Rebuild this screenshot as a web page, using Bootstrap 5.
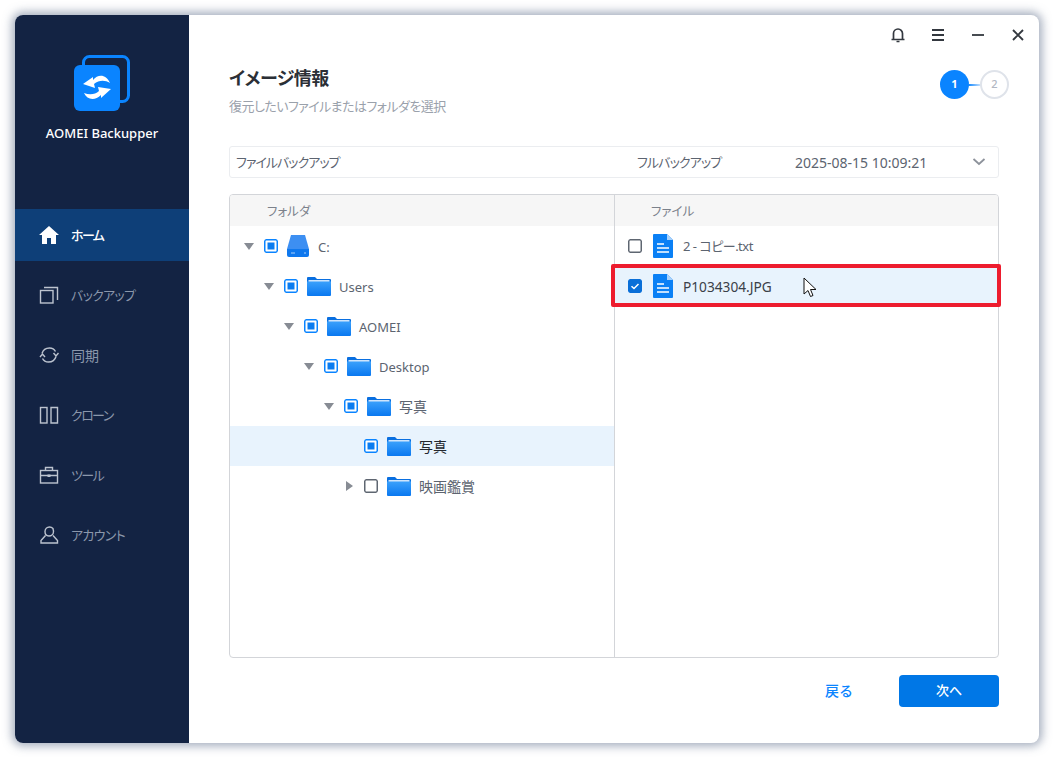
<!DOCTYPE html>
<html lang="ja">
<head>
<meta charset="utf-8">
<title>AOMEI Backupper</title>
<link href="https://cdn.jsdelivr.net/npm/bootstrap@5.3.0/dist/css/bootstrap.min.css" rel="stylesheet">
<style>
html,body{height:100%;background:#fff;margin:0;overflow:hidden}
body{font-family:"Noto Sans","Noto Sans CJK JP",sans-serif;font-size:13px;color:#5c6470;padding:15px;font-feature-settings:"palt"}
.appwin{width:1024px;height:728px;border-radius:8px;box-shadow:0 0 10px 3px rgba(90,105,135,.55);position:relative;background:#fff}
.side{width:174px;background:#132343;border-radius:8px 0 0 8px;flex:none}
.logo-box{height:194px;padding-top:40px}
.logo-name{color:#fff;font-size:13px;font-weight:500;margin-top:11px;line-height:18px}
.side-item{height:52px;margin-bottom:8px;padding-left:24px;color:#8b97ab;font-size:13px;gap:12px}
.side-item span{padding-top:1px;letter-spacing:-.7px}
.side-item .tight{letter-spacing:-1.6px}
.side-item .kj{font-size:14px;letter-spacing:0}
.side-item.on{background:#0e3f78;color:#fff;font-weight:500}
.side-item svg{flex:none}
.main{padding:0 40px;min-width:0}
.tbar{height:40px;margin-right:-27px;gap:24px}
.tbar svg{display:block}
.head-h{font-size:18px;font-weight:700;color:#2b2f36;line-height:26px;margin:0;letter-spacing:-.5px}
.head-s{font-size:13px;color:#9aa1ab;line-height:18px;margin-top:6px;letter-spacing:-.55px}
.headrow{height:91px;padding-top:10px}
.stepc{width:29px;height:29px;border-radius:50%;font-size:11px;font-weight:700}
.stepc.act{background:#0a84ff;color:#fff}
.stepc.off{border:2px solid #dfe3ea;color:#b1b7c3;font-weight:500}
.stepl{width:13px;height:2px;background:linear-gradient(90deg,#0a84ff,#cfe4fb);margin:0 -1px;flex:none}
.steps{margin-top:5px;margin-right:-10px}
.selbar{height:32px;border:1px solid #ebedf0;border-radius:3px;padding:0 12px 0 6px;color:#5c6470}
.selbar span{padding-top:1px}
.cx1{width:401px;letter-spacing:-1px}
.cx2{width:158px;letter-spacing:-.9px}
.dt{font-size:14px}
.panel{height:464px;margin-top:16px;border:1px solid #d3d5d9;border-radius:4px;overflow:hidden}
.pane-l{width:385px;border-right:1px solid #d3d5d9;flex:none}
.pane-r{flex:1 1 0;min-width:0}
.ph{height:31px;background:#f6f6f6;color:#7b818b;font-size:12.5px;padding-left:36px;padding-top:4px}
.pane-l .ph{padding-left:37px}
.trow{height:40px}
.trow span.tx{padding-top:3px}
.trow span.tx.kj{padding-top:1px}
.trow.sel{background:#e8f3fd;color:#23272e}
.kj{font-size:14px}
.tw{width:10px;margin-right:10px;flex:none;display:flex;justify-content:center}
.cb{width:14px;height:14px;border-radius:2px;flex:none;margin-right:9px;display:block}
.tic{flex:none;margin-right:8px;display:block}
.drv{margin-right:9px}
.lv0{padding-left:14px}.lv1{padding-left:34px}.lv2{padding-left:54px}.lv3{padding-left:74px}.lv4{padding-left:94px}.lv5{padding-left:114px}
.frow{height:40px;padding-left:13px}
.frow span.tx{padding-top:2px}
.frow.sel{background:#e8f3fd;color:#3a4048}
.frow .cb{margin-right:11px}
.frow .tic{margin-right:10px}
.fa{letter-spacing:-.5px}
.fn{font-size:13.7px}
.foot{height:85px;padding-bottom:20px}
.btn-back{color:#0a84ff;font-size:14px;font-weight:500;width:80px;margin-right:20px;padding:0;border:0;background:none}
.btn-next{width:100px;height:32px;background:#0077e6;color:#fff;border:0;border-radius:4px;font-size:13px;font-weight:500;padding:0}
.redbox{position:absolute;left:596px;top:249px;width:390px;height:43px;border:4px solid #ed1c2e;border-radius:2px;pointer-events:none}
.mouse{position:absolute;left:788px;top:262px}
</style>
</head>
<body>
<div class="appwin d-flex">
  <aside class="side d-flex flex-column">
    <div class="logo-box d-flex flex-column align-items-center">
      <svg width="58" height="58" viewBox="0 0 58 58"><rect x="10.500" y="1.500" width="45" height="45" rx="6" fill="none" stroke="#0a84ff" stroke-width="3"/><rect x="1" y="10" width="46" height="46" rx="6" fill="#0a84ff"/><path d="M10 29l10-7v3c5-6 13-6 17 3-5-3-11-3-16 1l1 4z" fill="#fff"/><path d="M38 34l-10 9v-3c-6 6-14 5-17-2 5 2 11 2 15-2l-1-4z" fill="#fff"/></svg>
      <div class="logo-name">AOMEI Backupper</div>
    </div>
    <div class="side-item on d-flex align-items-center">
      <svg width="20" height="18" viewBox="0 0 20 18"><path d="M10 0L0 9h3v9h5v-6h4v6h5V9h3z" fill="#fff"/></svg><span class="tight">ホーム</span>
    </div>
    <div class="side-item d-flex align-items-center">
      <svg width="20" height="18" viewBox="0 0 20 18" fill="none" stroke="#bcc3cf" stroke-width="1.400"><rect x="1.500" y="4.500" width="12.500" height="12.500"/><path d="M5 1.500h13.500V14"/></svg><span>バックアップ</span>
    </div>
    <div class="side-item d-flex align-items-center">
      <svg width="20" height="18" viewBox="0 0 20 18" fill="none" stroke="#bcc3cf" stroke-width="1.400"><path d="M3 7.500C4 4 7 2 10.500 2c3 0 5 1.500 6 3.500"/><path d="M17 10.500C16 14 13 16 9.500 16c-3 0-5-1.500-6-3.500"/><path d="M1 11l2.500-3L6 11M14.500 7l2.500 3 2.500-3"/></svg><span class="kj">同期</span>
    </div>
    <div class="side-item d-flex align-items-center">
      <svg width="20" height="18" viewBox="0 0 20 18" fill="none" stroke="#bcc3cf" stroke-width="1.400"><rect x="1.500" y="1.500" width="6.500" height="15.500"/><path d="M12 1.500h6.500v15.500H12z"/></svg><span class="tight">クローン</span>
    </div>
    <div class="side-item d-flex align-items-center">
      <svg width="20" height="18" viewBox="0 0 20 18" fill="none" stroke="#bcc3cf" stroke-width="1.400"><rect x="1.500" y="4.500" width="17" height="12.500"/><path d="M6.500 4.500V1.500h7v3M1.500 9.500h17"/><rect x="8.500" y="8.500" width="3" height="2.500" fill="#bcc3cf" stroke="none"/></svg><span class="tight">ツール</span>
    </div>
    <div class="side-item d-flex align-items-center">
      <svg width="20" height="18" viewBox="0 0 20 18" fill="none" stroke="#bcc3cf" stroke-width="1.400"><path d="M6 5.500C6 3 8 1 10.500 1c2 0 3 1 3.500 1.500 0 1 .5 1.500.5 3 0 2.500-2 4.500-4.500 4.500S6 8 6 5.500z"/><path d="M6.500 9.500L2 14.500v2.500h16.500v-2.500L14 9.500"/></svg><span>アカウント</span>
    </div>
  </aside>
  <main class="main flex-grow-1 d-flex flex-column">
    <div class="tbar d-flex align-items-center justify-content-end">
      <svg width="16" height="16" viewBox="0 0 16 16" fill="none" stroke="#33383f" stroke-width="1.700"><path d="M3.500 12V6.500a4.500 4.500 0 0 1 9 0V12M1.500 12.500h13"/><path d="M6.500 14.500h3" stroke-width="1.500"/></svg>
      <svg width="16" height="16" viewBox="0 0 16 16" stroke="#33383f" stroke-width="1.800"><path d="M2 3h12M2 8h12M2 13h12"/></svg>
      <svg width="16" height="16" viewBox="0 0 16 16" stroke="#33383f" stroke-width="1.800"><path d="M2 8h12"/></svg>
      <svg width="16" height="16" viewBox="0 0 16 16" stroke="#33383f" stroke-width="1.900"><path d="M3 3l10 10M13 3L3 13"/></svg>
    </div>
    <div class="headrow d-flex justify-content-between">
      <div>
        <h1 class="head-h">イメージ情報</h1>
        <div class="head-s">復元したいファイルまたはフォルダを選択</div>
      </div>
      <div class="steps d-flex align-items-center align-self-start">
        <div class="stepc act d-flex align-items-center justify-content-center">1</div>
        <div class="stepl"></div>
        <div class="stepc off d-flex align-items-center justify-content-center">2</div>
      </div>
    </div>
    <div class="selbar d-flex align-items-center">
      <span class="cx1">ファイルバックアップ</span>
      <span class="cx2">フルバックアップ</span>
      <span class="dt flex-grow-1">2025-08-15 10:09:21</span>
      <svg width="14" height="8" viewBox="0 0 14 8" fill="none" stroke="#8d929b" stroke-width="1.800"><path d="M1.500 1l5.500 5 5.500-5"/></svg>
    </div>
    <div class="panel d-flex">
      <section class="pane-l">
        <div class="ph d-flex align-items-center">フォルダ</div>
        <div class="trow lv0 d-flex align-items-center">
          <span class="tw"><svg width="10" height="7"><path d="M0 0h10L5 7z" fill="#878c94"/></svg></span>
          <svg class="cb" viewBox="0 0 14 14"><rect x=".75" y=".75" width="12.500" height="12.500" rx="1.500" fill="#fff" stroke="#0a84ff" stroke-width="1.500"/><rect x="3.500" y="3.500" width="7" height="7" fill="#0a7cf0"/></svg>
          <svg class="tic drv" width="22" height="22" viewBox="0 0 22 22"><path d="M4 0h14l4 14H0z" fill="#3d8ff2"/><path d="M0 14h22v6a2 2 0 0 1-2 2H2a2 2 0 0 1-2-2z" fill="#0f78ee"/><path d="M4 18h4M17 18h2" stroke="#a7cffb"/></svg>
          <span class="tx">C:</span>
        </div>
        <div class="trow lv1 d-flex align-items-center">
          <span class="tw"><svg width="10" height="7"><path d="M0 0h10L5 7z" fill="#878c94"/></svg></span>
          <svg class="cb" viewBox="0 0 14 14"><rect x=".75" y=".75" width="12.500" height="12.500" rx="1.500" fill="#fff" stroke="#0a84ff" stroke-width="1.500"/><rect x="3.500" y="3.500" width="7" height="7" fill="#0a7cf0"/></svg>
          <svg class="tic" width="24" height="20" viewBox="0 0 24 20"><use href="#fld"/></svg>
          <span class="tx">Users</span>
        </div>
        <div class="trow lv2 d-flex align-items-center">
          <span class="tw"><svg width="10" height="7"><path d="M0 0h10L5 7z" fill="#878c94"/></svg></span>
          <svg class="cb" viewBox="0 0 14 14"><rect x=".75" y=".75" width="12.500" height="12.500" rx="1.500" fill="#fff" stroke="#0a84ff" stroke-width="1.500"/><rect x="3.500" y="3.500" width="7" height="7" fill="#0a7cf0"/></svg>
          <svg class="tic" width="24" height="20" viewBox="0 0 24 20"><use href="#fld"/></svg>
          <span class="tx">AOMEI</span>
        </div>
        <div class="trow lv3 d-flex align-items-center">
          <span class="tw"><svg width="10" height="7"><path d="M0 0h10L5 7z" fill="#878c94"/></svg></span>
          <svg class="cb" viewBox="0 0 14 14"><rect x=".75" y=".75" width="12.500" height="12.500" rx="1.500" fill="#fff" stroke="#0a84ff" stroke-width="1.500"/><rect x="3.500" y="3.500" width="7" height="7" fill="#0a7cf0"/></svg>
          <svg class="tic" width="24" height="20" viewBox="0 0 24 20"><use href="#fld"/></svg>
          <span class="tx">Desktop</span>
        </div>
        <div class="trow lv4 d-flex align-items-center">
          <span class="tw"><svg width="10" height="7"><path d="M0 0h10L5 7z" fill="#878c94"/></svg></span>
          <svg class="cb" viewBox="0 0 14 14"><rect x=".75" y=".75" width="12.500" height="12.500" rx="1.500" fill="#fff" stroke="#0a84ff" stroke-width="1.500"/><rect x="3.500" y="3.500" width="7" height="7" fill="#0a7cf0"/></svg>
          <svg class="tic" width="24" height="20" viewBox="0 0 24 20"><use href="#fld"/></svg>
          <span class="tx kj">写真</span>
        </div>
        <div class="trow sel lv5 d-flex align-items-center">
          <span class="tw"></span>
          <svg class="cb" viewBox="0 0 14 14"><rect x=".75" y=".75" width="12.500" height="12.500" rx="1.500" fill="#fff" stroke="#0a84ff" stroke-width="1.500"/><rect x="3.500" y="3.500" width="7" height="7" fill="#0a7cf0"/></svg>
          <svg class="tic" width="24" height="20" viewBox="0 0 24 20"><use href="#fld"/></svg>
          <span class="tx kj">写真</span>
        </div>
        <div class="trow lv5 d-flex align-items-center">
          <span class="tw"><svg width="7" height="10"><path d="M0 0v10l7-5z" fill="#878c94"/></svg></span>
          <svg class="cb" viewBox="0 0 14 14"><rect x=".75" y=".75" width="12.500" height="12.500" rx="1.500" fill="#fff" stroke="#5e6671" stroke-width="1.500"/></svg>
          <svg class="tic" width="24" height="20" viewBox="0 0 24 20"><use href="#fld"/></svg>
          <span class="tx kj">映画鑑賞</span>
        </div>
      </section>
      <section class="pane-r">
        <div class="ph d-flex align-items-center">ファイル</div>
        <div class="frow d-flex align-items-center">
          <svg class="cb" viewBox="0 0 14 14"><rect x=".75" y=".75" width="12.500" height="12.500" rx="1.500" fill="#fff" stroke="#5e6671" stroke-width="1.500"/></svg>
          <svg class="tic" width="20" height="24" viewBox="0 0 20 24"><use href="#doc"/></svg>
          <span class="tx fa">2 - コピー.txt</span>
        </div>
        <div class="frow sel d-flex align-items-center">
          <svg class="cb" viewBox="0 0 14 14"><rect width="14" height="14" rx="2" fill="#0a6fd8"/><path d="M3.500 7.200l2.500 2.300 4.500-4.500" fill="none" stroke="#fff" stroke-width="1.500"/></svg>
          <svg class="tic" width="20" height="24" viewBox="0 0 20 24"><use href="#doc"/></svg>
          <span class="tx fn">P1034304.JPG</span>
        </div>
      </section>
    </div>
    <div class="foot d-flex align-items-center justify-content-end">
      <button class="btn-back" type="button">戻る</button>
      <button class="btn-next" type="button">次へ</button>
    </div>
  </main>
  <div class="redbox"></div>
  <svg class="mouse" width="14" height="22" viewBox="0 0 14 22"><path d="M1 1v16l4-3.500 2.500 6 2.500-1-2.500-6H13z" fill="#fff" stroke="#111" stroke-width="1"/></svg>
</div>
<svg width="0" height="0" class="position-absolute">
  <defs>
    <linearGradient id="fg" x1="0" y1="0" x2="0" y2="1"><stop offset="0" stop-color="#3aa0fb"/><stop offset="1" stop-color="#0a78f0"/></linearGradient>
    <symbol id="fld" viewBox="0 0 24 20"><path d="M0 2a1 1 0 0 1 1-1h7l2 2h13a1 1 0 0 1 1 1v3H0z" fill="#0a6fe0"/><path d="M1.500 4h21v2h-21z" fill="#cfe5fc"/><path d="M0 5.500h24V19a1 1 0 0 1-1 1H1a1 1 0 0 1-1-1z" fill="url(#fg)"/></symbol>
    <symbol id="doc" viewBox="0 0 20 24"><path d="M1 0h13l6 6v17a1 1 0 0 1-1 1H1a1 1 0 0 1-1-1V1a1 1 0 0 1 1-1z" fill="#0a80f5"/><path d="M14 0l6 6h-6z" fill="#a9d2fb"/><path d="M4 10h7M4 14h12M4 18h12" stroke="#fff" stroke-width="1.600"/></symbol>
  </defs>
</svg>
</body>
</html>
